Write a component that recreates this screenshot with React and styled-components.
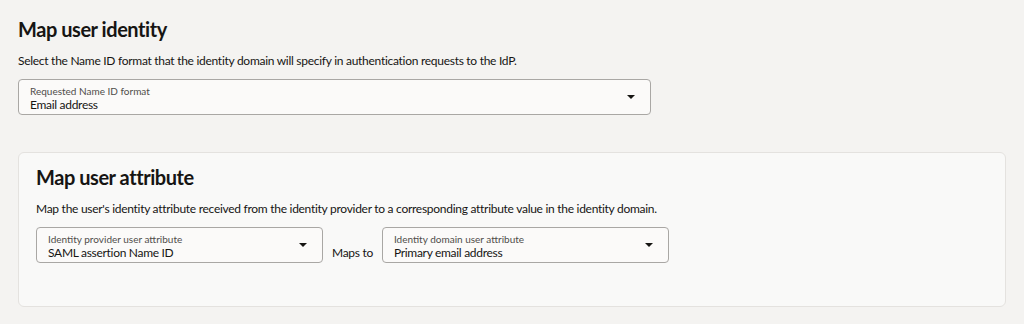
import React from 'react';
import styled, { createGlobalStyle } from 'styled-components';

const GlobalStyle = createGlobalStyle`
  html, body {
    margin: 0;
    padding: 0;
    background: #f4f3f1;
  }
  body {
    font-family: Lato, "Noto Sans", sans-serif;
    color: #161513;
  }
`;

const Page = styled.div`
  width: 1024px;
  height: 324px;
  box-sizing: border-box;
  padding: 14px 18px 0 18px;
  overflow: hidden;
`;

const Title = styled.h2`
  margin: 0;
  font-size: 20px;
  line-height: 30px;
  font-weight: 700;
  letter-spacing: -0.45px;
`;

const Description = styled.p`
  margin: 8px 0 9px;
  font-size: 12px;
  line-height: 18px;
  letter-spacing: -0.28px;
`;

const SelectBox = styled.div`
  position: relative;
  box-sizing: border-box;
  width: ${props => props.width}px;
  height: 36px;
  padding: 3px 11px 0;
  background: #fbfaf9;
  border: 1px solid #a9a7a4;
  border-radius: 4px;
  display: flex;
  flex-direction: column;
  justify-content: center;
`;

const SelectLabel = styled.span`
  font-size: 10px;
  line-height: 12px;
  color: #4f4d4a;
`;

const SelectValue = styled.span`
  font-size: 12px;
  line-height: 16px;
  letter-spacing: -0.3px;
  color: #161513;
`;

const Caret = styled.span`
  position: absolute;
  right: 15px;
  top: 15px;
  width: 0;
  height: 0;
  border-left: 4px solid transparent;
  border-right: 4px solid transparent;
  border-top: 4px solid #161513;
`;

const Card = styled.section`
  margin-top: 37px;
  width: 988px;
  height: 155px;
  box-sizing: border-box;
  padding: 9px 17px 0;
  background: #f9f9f8;
  border: 1px solid #e4e2df;
  border-radius: 6px;
`;

const Row = styled.div`
  display: flex;
  align-items: flex-start;
`;

const MapsTo = styled.span`
  font-size: 12px;
  line-height: 16px;
  letter-spacing: -0.3px;
  padding: 18px 9px 0;
`;

const Select = ({ label, value, width }) => (
  <SelectBox width={width}>
    <SelectLabel>{label}</SelectLabel>
    <SelectValue>{value}</SelectValue>
    <Caret />
  </SelectBox>
);

const App = () => {
  return (
    <Page>
      <GlobalStyle />
      <Title>Map user identity</Title>
      <Description>
        Select the Name ID format that the identity domain will specify in authentication requests to the IdP.
      </Description>
      <Select label="Requested Name ID format" value="Email address" width={633} />
      <Card>
        <Title>Map user attribute</Title>
        <Description>
          Map the user's identity attribute received from the identity provider to a corresponding attribute value in the identity domain.
        </Description>
        <Row>
          <Select label="Identity provider user attribute" value="SAML assertion Name ID" width={287} />
          <MapsTo>Maps to</MapsTo>
          <Select label="Identity domain user attribute" value="Primary email address" width={287} />
        </Row>
      </Card>
    </Page>
  );
};

export default App;
